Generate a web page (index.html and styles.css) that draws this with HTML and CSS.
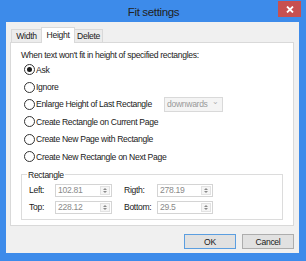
FILE: index.html
```html
<!DOCTYPE html>
<html lang="en">
<head>
  <meta charset="UTF-8" />
  <title>Fit settings</title>
  <link rel="stylesheet" href="styles.css">
</head>
<body>
  <div class="window">
    <div class="titlebar">
      <span class="title">Fit settings</span>
      <span class="close">
        <svg width="8" height="7" viewBox="0 0 8 7"><path d="M1 0.5 L7 6.5 M7 0.5 L1 6.5" stroke="#fff" stroke-width="1.8"/></svg>
      </span>
    </div>
    <div class="client">
      <div class="tabs">
        <span class="tab tab-width">Width</span>
        <span class="tab tab-height active">Height</span>
        <span class="tab tab-delete">Delete</span>
      </div>
      <div class="panel">
        <p class="intro">When text won't fit in height of specified rectangles:</p>
        <div class="options">
          <label class="opt"><span class="radio checked"></span>Ask</label>
          <label class="opt"><span class="radio"></span>Ignore</label>
          <div class="opt-row">
            <label class="opt opt-wide"><span class="radio"></span>Enlarge Height of Last Rectangle</label>
            <span class="select">downwards<span class="chev">&#8964;</span></span>
          </div>
          <label class="opt"><span class="radio"></span>Create Rectangle on Current Page</label>
          <label class="opt"><span class="radio"></span>Create New Page with Rectangle</label>
          <label class="opt"><span class="radio"></span>Create New Rectangle on Next Page</label>
        </div>
        <fieldset class="group">
          <legend>Rectangle</legend>
          <div class="fields">
            <span class="lbl">Left:</span>
            <span class="spin"><span class="val">102.81</span><span class="arrows"><i class="up"></i><i class="down"></i></span></span>
            <span class="lbl lbl-right">Rigth:</span>
            <span class="spin"><span class="val">278.19</span><span class="arrows"><i class="up"></i><i class="down"></i></span></span>
            <span class="lbl">Top:</span>
            <span class="spin"><span class="val">228.12</span><span class="arrows"><i class="up"></i><i class="down"></i></span></span>
            <span class="lbl lbl-right">Bottom:</span>
            <span class="spin"><span class="val">29.5</span><span class="arrows"><i class="up"></i><i class="down"></i></span></span>
          </div>
        </fieldset>
      </div>
      <div class="buttons">
        <button class="btn btn-default">OK</button>
        <button class="btn">Cancel</button>
      </div>
    </div>
  </div>
</body>
</html>
```

FILE: styles.css
```css
* {
  box-sizing: border-box;
}
body {
  margin: 0;
  font-family: 'Liberation Sans', Arial, sans-serif;
  font-size: 8.6px;
  letter-spacing: -0.32px;
  color: #1a1a1a;
}
.window {
  width: 306px;
  height: 261px;
  background: #3d8bea;
  display: flex;
  flex-direction: column;
  padding: 0 7px 8px 6px;
}
.titlebar {
  height: 22px;
  display: grid;
  grid-template-columns: 1fr auto 1fr;
  margin-right: -2px;
}
.title {
  grid-column: 2;
  font-size: 11.5px;
  letter-spacing: -0.35px;
  line-height: 22px;
  padding-top: 1px;
  color: #222;
}
.close {
  grid-column: 3;
  justify-self: end;
  align-self: start;
  margin-top: 1px;
  width: 23px;
  height: 16px;
  background: #c75050;
  display: flex;
  align-items: center;
  justify-content: center;
}
.client {
  flex: 1;
  background: #f0f0f0;
  padding: 5px 5px 4px 4px;
  display: flex;
  flex-direction: column;
}
.tabs {
  display: flex;
  align-items: flex-end;
  height: 16px;
  margin-bottom: -1px;
  padding-left: 1px;
}
.tab {
  height: 14px;
  line-height: 13px;
  text-align: center;
  border: 1px solid #d9d9d9;
  border-bottom: none;
  background: #ececec;
}
.tab-width {
  width: 31px;
}
.tab-height {
  width: 34px;
  margin-left: -1px;
}
.tab-delete {
  width: 29px;
  margin-left: -1px;
}
.tab.active {
  height: 16px;
  line-height: 14px;
  background: #fff;
  position: relative;
  z-index: 1;
}
.panel {
  height: 184px;
  border: 1px solid #d9d9d9;
  background: #fff;
  padding: 6px 10px 0;
}
.intro {
  margin: 0;
  line-height: 12px;
}
.opt {
  display: flex;
  align-items: center;
  height: 17.4px;
  padding-left: 3px;
}
.opt-row {
  display: flex;
  align-items: center;
}
.opt-wide {
  width: 143px;
}
.radio {
  width: 11px;
  height: 11px;
  border: 1px solid #333;
  border-radius: 50%;
  margin-right: 1px;
  background: #fff;
  display: flex;
  align-items: center;
  justify-content: center;
}
.radio.checked::after {
  content: "";
  width: 5px;
  height: 5px;
  border-radius: 50%;
  background: #1a1a1a;
}
.select {
  width: 59px;
  height: 15px;
  border: 1px solid #d9d9d9;
  background: #f4f4f4;
  color: #9a9a9a;
  display: flex;
  align-items: center;
  justify-content: space-between;
  padding: 0 3px 0 2px;
}
.chev {
  font-size: 8px;
  line-height: 8px;
  color: #b0b0b0;
  margin-top: -4px;
}
.group {
  margin: 3.5px 0 0;
  padding: 3px 0 5px 7px;
  border: 1px solid #dcdcdc;
  min-inline-size: 0;
}
.group legend {
  padding: 0 1px;
  margin-left: -2px;
  line-height: 12px;
}
.fields {
  display: grid;
  grid-template-columns: 26px 57px 45px 56px;
  grid-auto-rows: 13px;
  row-gap: 4px;
  align-items: center;
}
.lbl-right {
  padding-left: 12px;
}
.spin {
  height: 13px;
  display: flex;
  border: 1px solid #d4d4d4;
  background: #fff;
}
.val {
  flex: 1;
  padding-left: 2px;
  line-height: 11px;
  color: #8a8a8a;
}
.arrows {
  width: 10px;
  margin: 1px;
  border: 1px solid #e2e2e2;
  background: #f5f5f5;
  display: flex;
  flex-direction: column;
  align-items: center;
  justify-content: space-around;
}
.arrows i {
  display: block;
  width: 0;
  height: 0;
  border-left: 2px solid transparent;
  border-right: 2px solid transparent;
}
.arrows .up {
  border-bottom: 2px solid #8a8a8a;
}
.arrows .down {
  border-top: 2px solid #8a8a8a;
}
.buttons {
  display: flex;
  justify-content: flex-end;
  gap: 6px;
  margin-top: 8px;
}
.btn {
  width: 52px;
  height: 15px;
  padding: 0;
  font-family: inherit;
  font-size: 8.6px;
  letter-spacing: -0.32px;
  color: #1a1a1a;
  background: #e1e1e1;
  border: 1px solid #adadad;
}
.btn-default {
  border-color: #5b9ee0;
}
```
